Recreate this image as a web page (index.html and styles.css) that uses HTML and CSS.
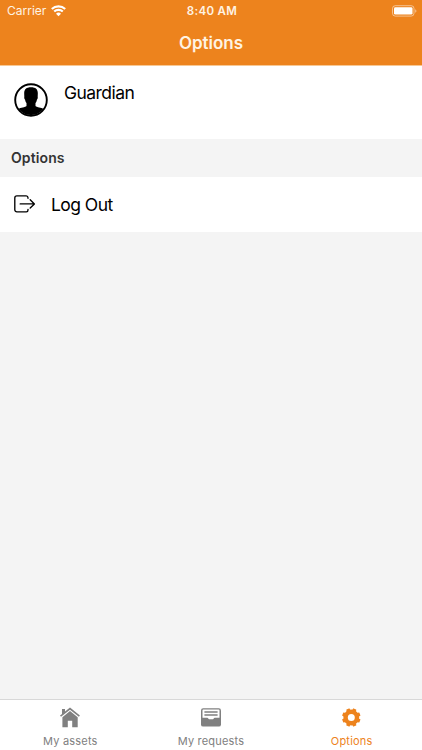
FILE: index.html
```html
<!DOCTYPE html>
<html lang="en">
<head>
<meta charset="utf-8">
<title>Options</title>
<link rel="stylesheet" href="styles.css">
</head>
<body>
<div class="app">
  <header class="header">
    <div class="status">
      <div class="carrier"><span>Carrier</span>
        <svg class="wifi" width="15" height="12" viewBox="0 0 15 12"><path d="M.8 4.100a9.600 9.600 0 0 1 13.400 0M3.200 6.600a6.200 6.200 0 0 1 8.600 0" fill="none" stroke="currentColor" stroke-width="2.100"/><path d="M7.500 11.200 5 8.700a3.600 3.600 0 0 1 5 0z" fill="currentColor"/></svg>
      </div>
      <div class="time">8:40 AM</div>
      <svg class="battery" width="25" height="12" viewBox="0 0 25 12"><rect x=".5" y=".7" width="21.500" height="10.400" rx="2.800" fill="none" stroke="#fff" stroke-opacity=".5"/><rect x="2" y="2.200" width="18.500" height="7.400" rx="1.400" fill="#fff"/><path d="M23.200 4.200v3.600c1.700-.6 1.700-3 0-3.600z" fill="#fff" fill-opacity=".5"/></svg>
    </div>
    <h1 class="title"><span>Options</span></h1>
  </header>
  <section class="profile">
    <svg class="avatar" width="34" height="34" viewBox="0 0 34 34"><circle cx="17" cy="17" r="15.800" fill="#fff" stroke="#000" stroke-width="1.900"/><path d="M17 4.200c4.900 0 7 2.200 6.800 6.600l-.1 3c.2.900-.1 2.300-.8 2.900-.2 1.500-.8 2.600-1.400 3.400v2.900c1.200 1.300 5.900 1.600 8.100 2.800A15.800 15.800 0 0 1 4.400 25.800c2.200-1.200 6.900-1.500 8.100-2.800v-2.900c-.6-.8-1.200-1.900-1.400-3.400-.7-.6-1-2-.8-2.900l-.1-3C10 6.400 12.100 4.200 17 4.200z"/></svg>
    <span class="name">Guardian</span>
  </section>
  <h2 class="section-title"><span>Options</span></h2>
  <div class="row">
    <svg class="logout" width="22" height="18" viewBox="0 0 22 18" fill="none" stroke="#000" stroke-width="1.350" stroke-linecap="round" stroke-linejoin="round"><path d="M14 3.200V2.700A2 2 0 0 0 12.200.8H2.900A2.100 2.100 0 0 0 .8 2.900v11.900a2.100 2.100 0 0 0 2.100 2.100h9.300a2 2 0 0 0 1.800-2v-.4M6.200 8.900h14.200M16.200 4.800l4.200 4.100-4.200 4.100"/></svg>
    <span class="label">Log Out</span>
  </div>
  <main class="space"></main>
  <nav class="tabs">
    <div class="tab">
      <svg width="22" height="22" viewBox="0 0 22 22" fill="currentColor"><path d="M3 2h3v2.600L11 .6l9.900 8-1 1.200L11 2.700 2 9.800 1 8.600l2-1.600z"/><path d="M11 4 3.400 10.200V20.300h5.400v-6.600h4.400v6.600h5.500V10.200z"/></svg>
      <span>My assets</span>
    </div>
    <div class="tab">
      <svg width="22" height="22" viewBox="0 0 22 22"><rect x="1" y="1.300" width="20" height="18.300" rx="2.200" fill="currentColor"/><path d="M2.500 3.200q0-.7.700-.7h15.600q.7 0 .7.700v7.600h-4.700q-.8 0-1.100.8-.2.600-.9.600H9.200q-.7 0-.9-.6-.3-.8-1.100-.8H2.500z" fill="#fff"/><path d="M4.400 5h13.200M4.400 8h13.200" stroke="currentColor" stroke-width="1.300"/></svg>
      <span>My requests</span>
    </div>
    <div class="tab active">
      <svg width="22" height="22" viewBox="0 0 22 22"><circle cx="10.300" cy="10.500" r="5.700" fill="none" stroke="currentColor" stroke-width="4.400"/><g fill="currentColor" transform="translate(-.7 0) rotate(22.500 11 10.500)"><path id="tooth" d="M8.800 4 9.300 1.500q.1-.3.400-.3h2.600q.3 0 .4.300L13.200 4z"/><use href="#tooth" transform="rotate(45 11 10.500)"/><use href="#tooth" transform="rotate(90 11 10.500)"/><use href="#tooth" transform="rotate(135 11 10.500)"/><use href="#tooth" transform="rotate(180 11 10.500)"/><use href="#tooth" transform="rotate(225 11 10.500)"/><use href="#tooth" transform="rotate(270 11 10.500)"/><use href="#tooth" transform="rotate(315 11 10.500)"/></g></svg>
      <span>Options</span>
    </div>
  </nav>
</div>
</body>
</html>
```
FILE: styles.css
```css
* { box-sizing: border-box; }
body { margin: 0; font-family: Inter, "Liberation Sans", sans-serif; color: #000; }
svg { display: block; flex: none; }
.app { width: 422px; height: 750px; display: flex; flex-direction: column; background: #f4f4f4; overflow: hidden; }
.header { height: 66px; background: #ed831d; border-bottom: 1px solid #f7c894; color: #fff; flex: none; }
.status { height: 22px; display: grid; grid-template-columns: 1fr auto 1fr; align-items: center; padding: 0 5px 0 7px; font-size: 12px; line-height: 22px; }
.carrier { display: flex; gap: 5px; align-items: center; letter-spacing: 0; color: #fff3e3; }
.wifi { color: #fff; }
.time { font-weight: 600; font-size: 11.500px; letter-spacing: .35px; color: #fff3e3; }
.battery { justify-self: end; }
.title { margin: 0; height: 42px; font-size: 17px; font-weight: 600; line-height: 42px; text-align: center; color: #fff3e3; }
.profile { height: 73px; flex: none; background: #fff; display: flex; align-items: flex-start; padding: 17px 14px; gap: 16px; }
.name { font-size: 17.500px; line-height: 20px; letter-spacing: -.55px; }
.section-title { margin: 0; height: 37.500px; flex: none; padding-left: 11px; font-size: 14px; line-height: 37px; font-weight: 600; letter-spacing: .1px; color: #333; }
.row { height: 55.500px; flex: none; background: #fff; display: flex; align-items: center; padding: 0 14px; gap: 15px; }
.label { font-size: 17.500px; line-height: 22px; letter-spacing: -.55px; padding-top: 1px; }
.space { flex: 1; }
.tabs { height: 51px; flex: none; background: #fff; border-top: 1px solid #d8d8d8; display: grid; grid-template-columns: repeat(3, 1fr); }
.tab { display: flex; flex-direction: column; align-items: center; padding-top: 7px; color: #808080; font-size: 11px; line-height: 14px; }
.tab span { margin-top: 5px; letter-spacing: .2px; }
.tab.active { color: #ed831d; }
```
